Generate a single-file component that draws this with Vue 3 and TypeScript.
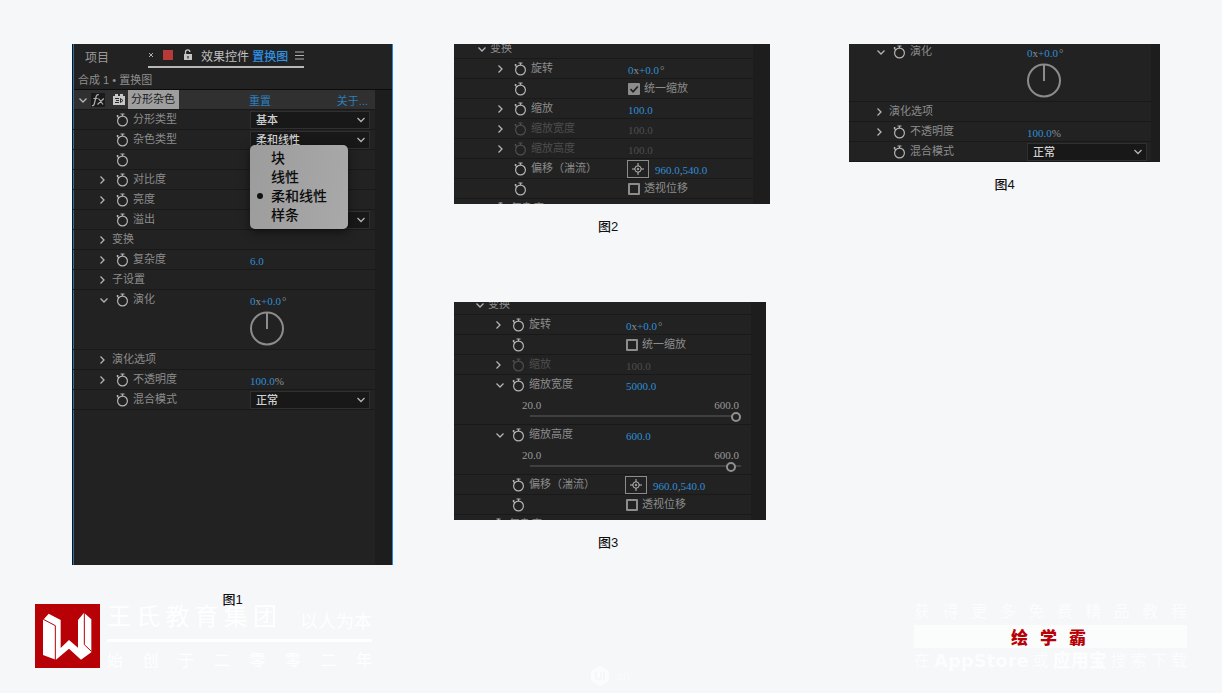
<script setup lang="ts">
import { reactive } from 'vue'

type RowKind =
  | 'group'
  | 'select'
  | 'check'
  | 'number'
  | 'percent'
  | 'angle'
  | 'dial'
  | 'point'
  | 'slider'
  | 'none'

interface Row {
  kind: RowKind
  label?: string
  arrow?: 'right' | 'down'
  outer?: boolean
  dim?: boolean
  value?: string
  options?: string[]
  text?: string
  checked?: boolean
  amount?: number
}

interface Figure {
  id: string
  caption: string
  full?: boolean
  rows: Row[]
}

const main: Row[] = [
  { kind: 'select', label: '分形类型', value: '基本', options: ['基本'] },
  { kind: 'select', label: '杂色类型', value: '柔和线性', options: ['块', '线性', '柔和线性', '样条'] },
  { kind: 'check', text: '', checked: false },
  { kind: 'none', label: '对比度', arrow: 'right' },
  { kind: 'none', label: '亮度', arrow: 'right' },
  { kind: 'select', label: '溢出', value: '', options: [''] },
  { kind: 'group', label: '变换', arrow: 'right' },
  { kind: 'number', label: '复杂度', arrow: 'right', value: '6.0' },
  { kind: 'group', label: '子设置', arrow: 'right' },
]

const evolution = (): Row[] => [
  { kind: 'dial', label: '演化', arrow: 'down' },
  { kind: 'group', label: '演化选项', arrow: 'right' },
  { kind: 'percent', label: '不透明度', arrow: 'right', value: '100.0' },
  { kind: 'select', label: '混合模式', value: '正常', options: ['正常'] },
]

const columns = reactive<Figure[][]>([
  [{ id: 'fig1', caption: '图1', full: true, rows: [...main, ...evolution()] }],
  [
    {
      id: 'fig2',
      caption: '图2',
      rows: [
        { kind: 'group', label: '变换', arrow: 'down', outer: true },
        { kind: 'angle', label: '旋转', arrow: 'right' },
        { kind: 'check', text: '统一缩放', checked: true },
        { kind: 'number', label: '缩放', arrow: 'right', value: '100.0' },
        { kind: 'number', label: '缩放宽度', arrow: 'right', value: '100.0', dim: true },
        { kind: 'number', label: '缩放高度', arrow: 'right', value: '100.0', dim: true },
        { kind: 'point', label: '偏移（湍流）' },
        { kind: 'check', text: '透视位移', checked: false },
        { kind: 'none', label: '复杂度', arrow: 'right', outer: true },
      ],
    },
    {
      id: 'fig3',
      caption: '图3',
      rows: [
        { kind: 'group', label: '变换', arrow: 'down', outer: true },
        { kind: 'angle', label: '旋转', arrow: 'right' },
        { kind: 'check', text: '统一缩放', checked: false },
        { kind: 'number', label: '缩放', arrow: 'right', value: '100.0', dim: true },
        { kind: 'slider', label: '缩放宽度', arrow: 'down', value: '5000.0', amount: 600 },
        { kind: 'slider', label: '缩放高度', arrow: 'down', value: '600.0', amount: 585 },
        { kind: 'point', label: '偏移（湍流）' },
        { kind: 'check', text: '透视位移', checked: false },
        { kind: 'none', label: '复杂度', arrow: 'right', outer: true },
      ],
    },
  ],
  [{ id: 'fig4', caption: '图4', rows: evolution() }],
])

const menu = ['块', '线性', '柔和线性', '样条']
</script>

<template>
  <div class="page">
    <main class="board">
      <div v-for="(column, c) in columns" :key="c" class="column">
        <figure v-for="fig in column" :key="fig.id" :class="['figure', fig.id]">
          <section class="panel">
            <template v-if="fig.full">
              <nav class="tabs">
                <button type="button" class="tab">项目</button>
                <button type="button" class="tab active">
                  <svg class="close" width="6" height="6" viewBox="0 0 6 6"><path d="M1 1l4 4M5 1l-4 4" /></svg>
                  <span class="swatch"></span>
                  <svg class="lock" width="10" height="12" viewBox="0 0 10 12">
                    <path d="M2.500 5V3a2.200 2.200 0 0 1 4.400 0" fill="none" stroke="#c4c4c4" stroke-width="1.300" />
                    <path d="M1 5h8v6H1z" fill="#c4c4c4" />
                    <path d="M4.400 7h1.200v2.400H4.400z" fill="#222" />
                  </svg>
                  <span class="tab-name">效果控件 <b>置换图</b></span>
                  <svg class="burger" width="9" height="9" viewBox="0 0 9 9"><path d="M0 1h9M0 4.500h9M0 8h9" /></svg>
                </button>
              </nav>
              <p class="comp">合成 1 • 置换图</p>
              <div class="effect">
                <svg class="arrow" width="10" height="10" viewBox="0 0 10 10"><path d="M1.500 3.500L5 7l3.500-3.500" /></svg>
                <span class="fx">
                  <svg width="14" height="14" viewBox="0 0 14 14">
                    <path d="M1 12.500c1.400.4 2-.4 2.400-2L5 4c.4-1.800 1.200-2.600 2.800-2.200M2.400 5.500h4.200M7.500 5.500l4.500 6M12.800 5.500l-6.300 6" />
                  </svg>
                </span>
                <svg class="plug" width="13" height="12" viewBox="0 0 13 12">
                  <path d="M0 2h2V0h3v2h2V0h3v2h2v9H0z" fill="#c8c8c8" />
                  <path d="M2 4.500h4M3 6.500h3M2 8.500h4M7.500 4.500L10 6.500 7.500 8.500z" fill="none" stroke="#2b2b2b" />
                </svg>
                <span class="effect-name">分形杂色</span>
                <a href="#reset" class="reset">重置</a>
                <a href="#about" class="about">关于...</a>
              </div>
            </template>

            <div class="rows">
              <div
                v-for="(row, r) in fig.rows"
                :key="r"
                :class="['row', 'is-' + row.kind, { outer: row.outer, dim: row.dim }]"
              >
                <div class="name">
                  <span class="slot">
                    <svg v-if="row.arrow" class="arrow" width="19" height="10" viewBox="0 0 19 10">
                      <path v-if="row.arrow === 'right'" d="M8.500 1.500L12 5 8.500 8.500" />
                      <path v-else d="M8.500 3.500L12 7l3.500-3.500" />
                    </svg>
                  </span>
                  <svg v-if="row.kind !== 'group'" class="watch" width="20" height="14" viewBox="0 0 20 14">
                    <circle cx="10.500" cy="8" r="4.900" />
                    <path d="M8.500 1h4M10.500 1v2M5 3l2 2M4.800 2.500h1.600" />
                  </svg>
                  <span v-if="row.label" class="label">{{ row.label }}</span>
                </div>

                <div class="value">
                  <span v-if="row.kind === 'select'" class="select">
                    <select v-model="row.value" :aria-label="row.label">
                      <option v-for="o in row.options" :key="o" :value="o">{{ o }}</option>
                    </select>
                    <svg class="arrow" width="10" height="10" viewBox="0 0 10 10"><path d="M1.500 3L5 6.500 8.500 3" /></svg>
                  </span>
                  <label v-else-if="row.kind === 'check'" class="check">
                    <input v-model="row.checked" type="checkbox" :aria-label="row.text || '反转'" />
                    <svg v-if="row.checked" width="12" height="12" viewBox="0 0 12 12">
                      <path d="M2.500 6.200l2.600 2.600L9.800 3.500" />
                    </svg>
                    <span>{{ row.text }}</span>
                  </label>
                  <span v-else-if="row.kind === 'angle' || row.kind === 'dial'" class="num">
                    0<i>x</i>+0.0<i class="deg">°</i>
                  </span>
                  <span v-else-if="row.kind === 'percent'" class="num">{{ row.value }}<i>%</i></span>
                  <template v-else-if="row.kind === 'point'">
                    <button type="button" class="target" aria-label="偏移">
                      <svg width="12" height="12" viewBox="0 0 12 12">
                        <circle cx="6" cy="6" r="3.200" />
                        <path d="M6 0v3M6 9v3M0 6h3M9 6h3M4.800 6h2.400M6 4.800v2.400" />
                      </svg>
                    </button>
                    <span class="num">960.0<i>,</i>540.0</span>
                  </template>
                  <span v-else-if="row.value" class="num">{{ row.value }}</span>
                </div>

                <svg v-if="row.kind === 'dial'" class="knob" width="36" height="36" viewBox="0 0 36 36">
                  <circle cx="17" cy="17.500" r="16" />
                  <path d="M17 2v16" />
                </svg>

                <div v-if="row.kind === 'slider'" class="range">
                  <div class="limits"><span>20.0</span><span>600.0</span></div>
                  <input v-model.number="row.amount" type="range" min="20" max="600" :aria-label="row.label" />
                </div>

                <ul v-if="fig.full && r === 1" class="menu">
                  <li v-for="item in menu" :key="item" :class="{ chosen: item === row.value }">
                    <button type="button" @click="row.value = item">{{ item }}</button>
                  </li>
                </ul>
              </div>
            </div>
          </section>
          <figcaption>{{ fig.caption }}</figcaption>
        </figure>
      </div>
    </main>

    <footer class="footer">
      <div class="brand">
        <svg class="logo" width="65" height="64" viewBox="0 0 195 192">
          <path d="M0 0h195v192H0z" fill="#b80007" />
          <path
            fill="#fff"
            d="M27 45L41 29 77 48v84l25-24 27 23V48l18-22 22 20v99l-31 22-36-33-39 33-5-1-34-13V48z"
          />
          <path fill="none" stroke="#b80007" stroke-width="3" d="M25 46l36 19v103M148 27v95l21 20" />
        </svg>
        <div class="brand-text">
          <div class="brand-top">
            <span class="spread company"><span v-for="ch in '王氏教育集团'" :key="ch">{{ ch }}</span></span>
            <span class="motto">以人为本</span>
          </div>
          <div class="rule"></div>
          <div class="spread since"><span v-for="(ch, i) in '始创于二零零二年'" :key="i">{{ ch }}</span></div>
        </div>
      </div>

      <div class="mark">
        <svg width="20" height="20" viewBox="0 0 20 20">
          <path d="M10 0l9 5v10l-9 5-9-5V5z" fill="#fbfcfc" />
          <path d="M6 6v5a2.500 2.500 0 0 0 5 0V6M14 6v8" fill="none" stroke="#f5f7f9" stroke-width="2" />
        </svg>
        <span>.cn</span>
      </div>

      <div class="promo">
        <div class="spread"><span v-for="ch in '获得更多免费精品教程'" :key="ch">{{ ch }}</span></div>
        <div class="band"><span v-for="ch in '绘学霸'" :key="ch">{{ ch }}</span></div>
        <div class="spread stores">
          <span>在</span><strong class="latin">AppStore</strong><span>或</span><strong>应用宝</strong>
          <span v-for="ch in '搜索下载'" :key="ch">{{ ch }}</span>
        </div>
      </div>
    </footer>
  </div>
</template>

<style>
body {
  background: #f6f7f9;
}
</style>

<style scoped>
.page {
  box-sizing: border-box;
  min-height: 100vh;
  padding-top: 44px;
  overflow: hidden;
  background: #f6f7f9;
  font-family: "Liberation Sans", "Noto Sans CJK SC", sans-serif;
  font-size: 11px;
}
button,
select,
input {
  margin: 0;
  padding: 0;
  border: 0;
  background: none;
  font: inherit;
  color: inherit;
}
i {
  font-style: normal;
}
.board {
  display: grid;
  grid-template-columns: minmax(0, 321fr) 61px minmax(0, 316fr) 79px minmax(0, 311fr);
  padding: 0 62px 0 72px;
}
.column:nth-child(1) {
  grid-column: 1;
}
.column:nth-child(2) {
  grid-column: 3;
}
.column:nth-child(3) {
  grid-column: 5;
}
.column {
  display: flex;
  flex-direction: column;
  gap: 67px;
}
.figure {
  margin: 0;
  --label: 178px;
  --indent: 20px;
  --outer: 20px;
  --edge: 9px;
}
.panel {
  box-sizing: border-box;
  overflow: hidden;
  background: linear-gradient(#1d1d1d, #1d1d1d) right / var(--edge) 100% no-repeat #222;
}
.fig1 {
  --edge: 17px;
}
.fig1 .panel {
  height: 521px;
  border-left: 1px solid #101418;
  border-right: 1px solid #2088e0;
  box-shadow: inset 1px 0 #286fb0;
}
.fig1 .tabs,
.fig1 .comp {
  margin-left: 1px;
}
.fig1 .row {
  grid-template-columns: 177px minmax(0, 1fr);
  --indent: 19px;
}
.fig2 {
  --label: 174px;
  --indent: 36px;
  --outer: 16px;
  --edge: 17px;
}
.fig2 .panel {
  height: 160px;
}
.fig2 .rows {
  margin-top: -5px;
}
.fig3 {
  --label: 172px;
  --indent: 34px;
  --outer: 14px;
  --edge: 15px;
  margin-right: 4px;
}
.fig3 .panel {
  height: 218px;
}
.fig3 .rows {
  margin-top: -7px;
}
.fig4 .panel {
  height: 118px;
}
.fig4 .rows {
  margin-top: -2px;
}
figcaption {
  margin-top: 15px;
  color: #111;
  font-size: 13px;
  font-weight: 500;
  line-height: 16px;
  text-align: center;
}
.fig1 figcaption {
  margin-top: 27px;
}
.fig2 figcaption {
  padding-right: 8px;
}
.fig3 figcaption {
  padding-right: 4px;
}

/* Panel header */
.tabs {
  display: flex;
  gap: 39px;
  height: 28px;
  padding-left: 11px;
  background: #222;
  font-size: 12px;
}
.tab {
  display: flex;
  align-items: center;
  box-sizing: border-box;
  height: 24px;
  color: #9a9a9a;
}
.tab.active {
  border-bottom: 2px solid #b8b8b8;
  color: #c0c0c0;
}
.tab b {
  color: #2f93e6;
  font-weight: 500;
}
.close,
.burger {
  fill: none;
  stroke: #b0b0b0;
  stroke-width: 1;
}
.swatch {
  width: 10px;
  height: 10px;
  margin: 0 10px 0 9px;
  background: #b83a38;
}
.tab-name {
  margin: 0 7px 0 8px;
}
.comp {
  height: 17px;
  margin: 0;
  padding-left: 4px;
  border-bottom: 1px solid #0c0c0c;
  background: #222;
  color: #8e8e8e;
  line-height: 17px;
}
.effect {
  display: flex;
  align-items: center;
  box-sizing: border-box;
  height: 20px;
  margin: 0 17px 0 1px;
  padding-left: 4px;
  border-bottom: 1px solid #191919;
  background: #303030;
}
.fx {
  display: flex;
  margin: 0 8px 0 3px;
  background: #1a1a1a;
}
.fx svg {
  fill: none;
  stroke: #b0b0b0;
  stroke-width: 1.2;
}
.effect-name {
  margin-left: 2px;
  padding: 0 4px 0 3px;
  background: #9e9e9e;
  color: #1c1c1c;
  line-height: 19px;
}
.effect a {
  color: #2b7fbe;
  text-decoration: none;
}
.reset {
  margin-left: 70px;
}
.about {
  margin-left: auto;
  padding-right: 7px;
}

/* Property rows */
.row {
  position: relative;
  display: grid;
  grid-template-columns: var(--label) minmax(0, 1fr);
  grid-template-rows: 19px;
  align-content: start;
  box-sizing: border-box;
  min-height: 20px;
  margin-right: var(--edge);
  border-bottom: 1px solid #191919;
  color: #8c8c8c;
  line-height: 16px;
}
.arrow {
  flex: none;
  fill: none;
  stroke: #b4b4b4;
  stroke-width: 1.3;
}
.name {
  display: flex;
  align-items: center;
  gap: 1px;
  padding-left: var(--indent);
  white-space: nowrap;
}
.outer .name {
  padding-left: var(--outer);
}
.label,
.check span {
  padding-bottom: 2px;
}
.slot {
  display: flex;
  flex: none;
  width: 19px;
}
.watch {
  flex: none;
  fill: none;
  stroke: #b4b4b4;
  stroke-width: 1.2;
}
.value {
  display: flex;
  align-items: center;
}
.num {
  padding-top: 2px;
  color: #2f8fd8;
  font-family: "Liberation Serif", serif;
  line-height: 14px;
  white-space: nowrap;
}
.num i {
  color: #909090;
}
.num .deg {
  margin-left: 1px;
}
.dim .name .label,
.dim .num {
  color: #4e4e4e;
}
.dim .watch {
  stroke: #4e4e4e;
}
.select {
  position: relative;
  display: flex;
  width: 120px;
}
.select select {
  appearance: none;
  box-sizing: border-box;
  width: 100%;
  height: 18px;
  padding-left: 5px;
  border: 1px solid #303030;
  border-radius: 0;
  background: #181818;
  color: #d0d0d0;
  font-weight: 500;
}
.select .arrow {
  position: absolute;
  top: 4px;
  right: 4px;
  pointer-events: none;
}
.check {
  position: relative;
  display: flex;
  align-items: center;
  gap: 4px;
}
.check input {
  appearance: none;
  box-sizing: border-box;
  width: 12px;
  height: 12px;
  border: 2px solid #8c8c8c;
  border-radius: 1px;
}
.check input:checked {
  background: #8c8c8c;
}
.check svg {
  position: absolute;
  left: 0;
  fill: none;
  stroke: #222;
  stroke-width: 1.8;
}
.target {
  display: flex;
  align-items: center;
  justify-content: center;
  box-sizing: border-box;
  width: 22px;
  height: 18px;
  margin: 0 6px 0 -1px;
  border: 1px solid #8c8c8c;
}
.target svg {
  fill: none;
  stroke: #b8b8b8;
}
.is-dial {
  min-height: 60px;
}
.knob {
  grid-column: 2;
  margin-top: 2px;
  fill: none;
  stroke: #8c8c8c;
  stroke-width: 2;
}
.is-slider {
  min-height: 50px;
}
.range {
  grid-column: 1 / -1;
  padding: 5px 10px 0 68px;
}
.limits {
  display: flex;
  justify-content: space-between;
  padding-right: 2px;
  color: #9a9a9a;
  font-family: "Liberation Serif", serif;
  line-height: 13px;
}
.range input {
  display: block;
  appearance: none;
  box-sizing: border-box;
  width: 100%;
  height: 10px;
  padding-left: 8px;
}
.range input::-webkit-slider-runnable-track {
  height: 10px;
  background: linear-gradient(#404040, #404040) 0 3px / 100% 2px no-repeat;
}
.range input::-webkit-slider-thumb {
  appearance: none;
  box-sizing: border-box;
  width: 10px;
  height: 10px;
  border: 2px solid #909090;
  border-radius: 50%;
  background: #222;
}

/* Open pop-up menu */
.menu {
  position: absolute;
  top: 15px;
  left: 177px;
  z-index: 2;
  box-sizing: border-box;
  width: 98px;
  margin: 0;
  padding: 4px 0;
  border-radius: 5px;
  background: linear-gradient(100deg, #9c9c9c, #a9a9a9);
  box-shadow: 0 3px 10px rgba(0, 0, 0, 0.5);
  list-style: none;
}
.menu li {
  position: relative;
  height: 19px;
}
.menu button {
  width: 100%;
  padding-left: 21px;
  color: #0c0c0c;
  font-size: 14px;
  font-weight: 500;
  line-height: 19px;
  text-align: left;
}
.menu .chosen::before {
  content: "";
  position: absolute;
  top: 6px;
  left: 7px;
  width: 6px;
  height: 6px;
  border-radius: 50%;
  background: #111;
}

/* Footer */
.footer {
  display: flex;
  align-items: flex-start;
  justify-content: space-between;
  margin-top: -4px;
  padding: 0 35px;
  color: #fff;
}
.brand {
  display: flex;
  gap: 7px;
  width: 337px;
}
.logo {
  flex: none;
}
.brand-text {
  flex: 1;
}
.spread {
  display: flex;
  justify-content: space-between;
}
.brand-top {
  display: flex;
  align-items: center;
  justify-content: space-between;
  height: 26px;
}
.company {
  width: 170px;
  font-size: 24px;
  line-height: 26px;
}
.motto {
  padding-top: 5px;
  font-size: 18px;
}
.rule {
  height: 3px;
  margin: 9px 0 10px;
  background: #fff;
}
.since {
  font-size: 16px;
  line-height: 18px;
}
.mark {
  display: flex;
  align-items: center;
  gap: 4px;
  margin: 62px 66px 0 0;
  color: #fafbfc;
  font-size: 12px;
}
.promo {
  width: 273px;
  color: #fcfdfd;
  font-size: 16px;
}
.promo .spread {
  line-height: 16px;
}
.band {
  display: flex;
  align-items: center;
  justify-content: center;
  gap: 12px;
  height: 23px;
  margin: 5px 0 4px;
  padding-right: 4px;
  background: #fbfdfc;
  color: #b80007;
  font-size: 17px;
  font-weight: 900;
}
.promo .stores {
  align-items: center;
  line-height: 18px;
}
.stores strong {
  font-size: 18px;
  font-weight: 900;
}
.stores .latin {
  font-family: "DejaVu Sans", sans-serif;
  font-weight: 700;
}
</style>
